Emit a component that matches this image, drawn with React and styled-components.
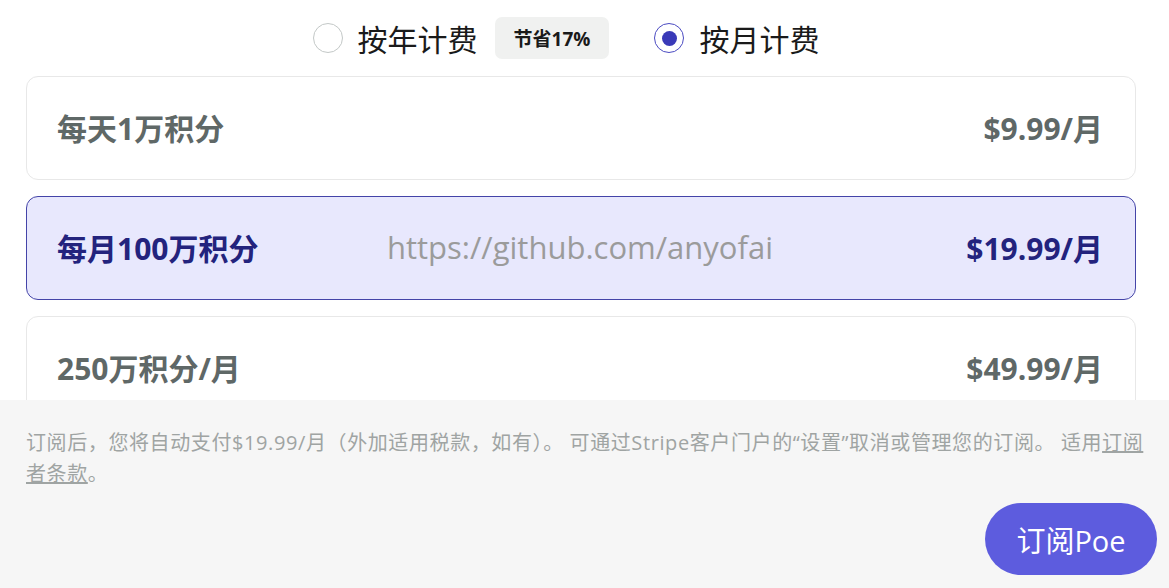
import React, { useState } from "react";
import styled, { createGlobalStyle } from "styled-components";

const GlobalStyle = createGlobalStyle`
  body {
    margin: 0;
    background: #ffffff;
    font-family: "Open Sans", "Noto Sans CJK SC", sans-serif;
  }
`;

const Page = styled.div`
  width: 1169px;
  height: 588px;
  display: flex;
  flex-direction: column;
  overflow: hidden;
`;

const PlanArea = styled.div`
  height: 400px;
  overflow: hidden;
  padding: 0 33px 0 26px;
  box-sizing: border-box;
`;

const BillingRow = styled.div`
  height: 76px;
  display: flex;
  align-items: center;
  justify-content: center;
  padding-right: 30px;
  box-sizing: border-box;
`;

const RadioOption = styled.label`
  display: flex;
  align-items: center;
  gap: 15px;
  font-size: 30px;
  color: #1a1a1a;
  cursor: pointer;
  margin-right: ${(p) => (p.$spaced ? "17px" : "0")};
`;

const RadioCircle = styled.span`
  width: 30px;
  height: 30px;
  border-radius: 50%;
  box-sizing: border-box;
  border: 1.5px solid ${(p) => (p.$checked ? "#4b4bc2" : "#c3c8c7")};
  display: flex;
  align-items: center;
  justify-content: center;

  &::after {
    content: "";
    width: 15px;
    height: 15px;
    border-radius: 50%;
    background: #3a3ab8;
    display: ${(p) => (p.$checked ? "block" : "none")};
  }
`;

const SaveBadge = styled.span`
  height: 42px;
  padding: 0 19px;
  display: flex;
  align-items: center;
  background: #f0f1f0;
  border-radius: 7px;
  font-size: 19px;
  font-weight: 700;
  color: #1a1a1a;
  margin-right: 45px;
`;

const CardList = styled.div`
  display: flex;
  flex-direction: column;
  gap: 16px;
`;

const PlanCard = styled.div`
  height: 104px;
  box-sizing: border-box;
  display: grid;
  grid-template-columns: 1fr auto 1fr;
  align-items: center;
  padding: 0 32px 3px 30px;
  border-radius: 12px;
  border: 1px solid ${(p) => (p.$selected ? "#4444a8" : "#e8e8e8")};
  background: ${(p) => (p.$selected ? "#e8e8fd" : "#ffffff")};
  color: ${(p) => (p.$selected ? "#23237d" : "#5f6867")};
  font-size: 30px;
  font-weight: 700;
  cursor: pointer;
`;

const PlanName = styled.span`
  justify-self: start;
`;

const PlanPrice = styled.span`
  justify-self: end;
  grid-column: 3;
`;

const Watermark = styled.span`
  font-weight: 400;
  font-size: 31px;
  color: #9b9b9b;
`;

const Footer = styled.div`
  flex: 1;
  background: #f6f6f6;
  padding: 27px 12px 13px 26px;
  display: flex;
  flex-direction: column;
  align-items: flex-end;
  box-sizing: border-box;
`;

const Notice = styled.p`
  margin: 0;
  align-self: stretch;
  font-size: 20px;
  line-height: 31px;
  letter-spacing: 0.6px;
  color: #9fa4a3;
`;

const TermsLink = styled.a`
  color: #9fa4a3;
  text-decoration: underline;
`;

const SubscribeButton = styled.button`
  margin-top: 14px;
  height: 72px;
  width: 172px;
  border: none;
  border-radius: 36px;
  background: #5d5cde;
  color: #ffffff;
  font-family: "Open Sans", "Noto Sans CJK SC", sans-serif;
  font-size: 29px;
  cursor: pointer;
`;

const plans = [
  { id: "daily", name: "每天1万积分", price: "$9.99/月" },
  { id: "monthly", name: "每月100万积分", price: "$19.99/月" },
  { id: "big", name: "250万积分/月", price: "$49.99/月" },
];

export default function App() {
  const [billing, setBilling] = useState("monthly");
  const [selected, setSelected] = useState("monthly");

  return (
    <>
      <GlobalStyle />
      <Page>
        <PlanArea>
          <BillingRow>
            <RadioOption $spaced onClick={() => setBilling("yearly")}>
              <RadioCircle $checked={billing === "yearly"} />
              按年计费
            </RadioOption>
            <SaveBadge>节省17%</SaveBadge>
            <RadioOption onClick={() => setBilling("monthly")}>
              <RadioCircle $checked={billing === "monthly"} />
              按月计费
            </RadioOption>
          </BillingRow>

          <CardList>
            {plans.map((plan) => (
              <PlanCard
                key={plan.id}
                $selected={selected === plan.id}
                onClick={() => setSelected(plan.id)}
              >
                <PlanName>{plan.name}</PlanName>
                {selected === plan.id && <Watermark>https://github.com/anyofai</Watermark>}
                <PlanPrice>{plan.price}</PlanPrice>
              </PlanCard>
            ))}
          </CardList>
        </PlanArea>

        <Footer>
          <Notice>
            订阅后，您将自动支付$19.99/月（外加适用税款，如有）。 可通过Stripe客户门户的“设置”取消或管理您的订阅。 适用
            <TermsLink href="#">订阅者条款</TermsLink>。
          </Notice>
          <SubscribeButton>订阅Poe</SubscribeButton>
        </Footer>
      </Page>
    </>
  );
}
